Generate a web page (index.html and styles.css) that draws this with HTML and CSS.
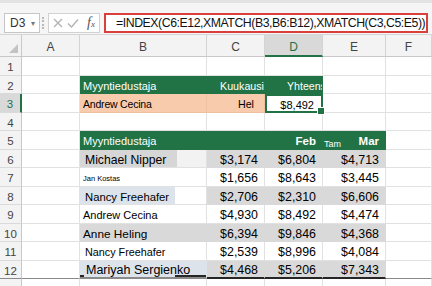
FILE: index.html
```html
<!DOCTYPE html>
<html lang="fi">
  <head>
    <meta charset="UTF-8" />
    <meta name="viewport" content="width=device-width, initial-scale=1.0" />
    <link rel="stylesheet" href="styles.css">
  </head>
  <body>
    <div class="formula-bar">
      <div class="name-box"><span>D3</span><span class="caret">&#9662;</span></div>
      <div class="grip"></div>
      <div class="fx-box">
        <svg class="tool" width="10" height="10" viewBox="0 0 10 10"><path d="M1 1L9 9M9 1L1 9" /></svg>
        <svg class="tool" width="12" height="10" viewBox="0 0 12 10"><path d="M1 5.5L4.5 9L11 1.5" /></svg>
        <span class="fx"><i>f</i><span class="fx-x">x</span></span>
      </div>
      <div class="formula">=INDEX(C6:E12,XMATCH(B3,B6:B12),XMATCH(C3,C5:E5))</div>
    </div>

    <div class="sheet">
      <div class="row head">
        <div class="corner"></div>
        <div class="col">A</div>
        <div class="col">B</div>
        <div class="col">C</div>
        <div class="col active">D</div>
        <div class="col">E</div>
        <div class="col">F</div>
      </div>

      <div class="row">
        <div class="num">1</div>
        <div class="cell"></div><div class="cell"></div><div class="cell"></div>
        <div class="cell"></div><div class="cell"></div><div class="cell"></div>
      </div>

      <div class="row">
        <div class="num">2</div>
        <div class="cell"></div>
        <div class="cell green title">Myyntiedustaja</div>
        <div class="cell green r month">Kuukausi</div>
        <div class="cell green total">Yhteensä</div>
        <div class="cell"></div><div class="cell"></div>
      </div>

      <div class="row">
        <div class="num active">3</div>
        <div class="cell"></div>
        <div class="cell orange pick">Andrew Cecina</div>
        <div class="cell orange r hel">Hel</div>
        <div class="cell selected r">$8,492</div>
        <div class="cell"></div><div class="cell"></div>
      </div>

      <div class="row">
        <div class="num">4</div>
        <div class="cell"></div><div class="cell"></div><div class="cell"></div>
        <div class="cell"></div><div class="cell"></div><div class="cell"></div>
      </div>

      <div class="row">
        <div class="num">5</div>
        <div class="cell"></div>
        <div class="cell green title">Myyntiedustaja</div>
        <div class="cell green"></div>
        <div class="cell green r"><b>Feb</b></div>
        <div class="cell green months"><span class="tam">Tam</span><b>Mar</b></div>
        <div class="cell"></div>
      </div>

      <div class="row">
        <div class="num">6</div>
        <div class="cell"></div>
        <div class="cell name n6">Michael Nipper</div>
        <div class="cell band r">$3,174</div>
        <div class="cell band r">$6,804</div>
        <div class="cell band r">$4,713</div>
        <div class="cell"></div>
      </div>

      <div class="row">
        <div class="num">7</div>
        <div class="cell"></div>
        <div class="cell name n7">Jan Kostas</div>
        <div class="cell r">$1,656</div>
        <div class="cell r">$8,643</div>
        <div class="cell r">$3,445</div>
        <div class="cell"></div>
      </div>

      <div class="row">
        <div class="num">8</div>
        <div class="cell"></div>
        <div class="cell name n8">Nancy Freehafer</div>
        <div class="cell band r">$2,706</div>
        <div class="cell band r">$2,310</div>
        <div class="cell band r">$6,606</div>
        <div class="cell"></div>
      </div>

      <div class="row">
        <div class="num">9</div>
        <div class="cell"></div>
        <div class="cell name n9">Andrew Cecina</div>
        <div class="cell r">$4,930</div>
        <div class="cell r">$8,492</div>
        <div class="cell r">$4,474</div>
        <div class="cell"></div>
      </div>

      <div class="row">
        <div class="num">10</div>
        <div class="cell"></div>
        <div class="cell name n10">Anne Heling</div>
        <div class="cell band r">$6,394</div>
        <div class="cell band r">$9,846</div>
        <div class="cell band r">$4,368</div>
        <div class="cell"></div>
      </div>

      <div class="row">
        <div class="num">11</div>
        <div class="cell"></div>
        <div class="cell name n11">Nancy Freehafer</div>
        <div class="cell r">$2,539</div>
        <div class="cell r">$8,996</div>
        <div class="cell r">$4,084</div>
        <div class="cell"></div>
      </div>

      <div class="row last">
        <div class="num">12</div>
        <div class="cell"></div>
        <div class="cell name n12">Mariyah Sergienko</div>
        <div class="cell band r end">$4,468</div>
        <div class="cell band r end">$5,206</div>
        <div class="cell band r end">$7,343</div>
        <div class="cell"></div>
      </div>

      <div class="row">
        <div class="num"></div>
        <div class="cell"></div><div class="cell"></div><div class="cell"></div>
        <div class="cell"></div><div class="cell"></div><div class="cell"></div>
      </div>
    </div>
  </body>
</html>
```

FILE: styles.css
```css
* {
  box-sizing: border-box;
}

body {
  margin: 0;
  width: 432px;
  height: 286px;
  overflow: hidden;
  background: #fff;
  color: #000;
  font-family: "Liberation Sans", Arial, sans-serif;
}

/* formula bar */
.formula-bar {
  display: flex;
  align-items: flex-start;
  height: 35px;
  padding: 10px 4px 0 4px;
  background: #f5f5f5;
  border-top: 3px solid #e3e3e3;
  border-bottom: 1px solid #d6d6d6;
}

.name-box {
  width: 36px;
  height: 20px;
  background: #fff;
  border: 1px solid #c6c6c6;
  display: flex;
  align-items: center;
  justify-content: space-between;
  padding: 0 4px 0 5px;
  font-size: 12px;
  color: #333;
}

.caret {
  font-size: 8px;
  color: #777;
}

.grip {
  width: 0;
  height: 12px;
  margin: 4px 4px 0 2px;
  border-left: 2px dotted #b8b8b8;
}

.fx-box {
  width: 52px;
  height: 20px;
  background: #fff;
  border: 1px solid #d2d2d2;
  display: flex;
  align-items: center;
  padding-left: 4px;
  gap: 4px;
}

.tool path {
  fill: none;
  stroke: #b4b4b4;
  stroke-width: 1.4;
}

.fx {
  margin-left: 4px;
  font-family: "Liberation Serif", serif;
  font-size: 14px;
  color: #555;
}

.fx-x {
  font-size: 9px;
  font-style: italic;
}

.formula {
  flex: 1;
  margin-left: 4px;
  height: 20px;
  background: #fff;
  border: 2px solid #d9403b;
  padding-left: 10px;
  font-size: 12.3px;
  letter-spacing: -0.45px;
  line-height: 16px;
  white-space: nowrap;
  overflow: hidden;
  color: #111;
}

/* grid */
.row {
  display: grid;
  grid-template-columns: 22px 58px 127px 58px 58px 63px 46px;
  height: 18px;
}

.row:nth-child(even) {
  height: 19px;
}

.row.head {
  height: 22px;
}

.corner {
  position: relative;
  background: #f3f3f3;
  border-right: 1px solid #c8c8c8;
  border-bottom: 1px solid #c8c8c8;
}

.corner::after {
  content: "";
  position: absolute;
  right: 3px;
  bottom: 3px;
  border-style: solid;
  border-width: 0 0 9px 9px;
  border-color: transparent transparent #c3c3c3 transparent;
}

.col {
  display: flex;
  align-items: center;
  justify-content: center;
  padding-top: 3px;
  background: #f3f3f3;
  border-right: 1px solid #d4d4d4;
  border-bottom: 1px solid #c8c8c8;
  font-size: 12px;
  color: #444;
}

.col.active {
  background: #d9d9d9;
  border-bottom: 2px solid #217346;
  color: #217346;
}

.num {
  display: flex;
  align-items: center;
  justify-content: center;
  padding-top: 2px;
  background: #f3f3f3;
  border-right: 1px solid #c8c8c8;
  border-bottom: 1px solid #dadada;
  font-size: 11.5px;
  color: #444;
}

.num.active {
  background: #d9d9d9;
  border-right: 2px solid #217346;
  color: #217346;
}

.cell {
  display: flex;
  align-items: center;
  padding: 2px 4px 0 4px;
  border-right: 1px solid #e1e1e1;
  border-bottom: 1px solid #e1e1e1;
  font-size: 12.4px;
  white-space: nowrap;
  overflow: hidden;
}

.r {
  justify-content: flex-end;
  padding-right: 6px;
}

.green {
  background: #217346;
  border-color: #217346;
  color: #fff;
}

.orange {
  background: #f8cbad;
  border-color: #f0bf9d;
}

.band {
  background: #d9d9d9;
  border-color: #d9d9d9;
}

.title {
  font-size: 11px;
  padding-left: 3px;
}

.month {
  font-size: 10.7px;
  padding-right: 0;
}

.total {
  font-size: 10.6px;
  padding-left: 22px;
  padding-right: 0;
}

.pick {
  font-size: 10.5px;
  letter-spacing: -0.2px;
  padding-left: 3px;
}

.hel {
  font-size: 10.7px;
  padding-right: 10px;
}

.selected {
  position: relative;
  overflow: visible;
  border: 2px solid #217346;
  font-size: 11px;
  padding-right: 7px;
}

.selected::after {
  content: "";
  position: absolute;
  right: -4px;
  bottom: -4px;
  width: 6px;
  height: 6px;
  background: #217346;
  border: 1px solid #fff;
}

.months {
  justify-content: space-between;
  padding: 0 6px 0 1px;
  font-size: 11.5px;
}

.months b {
  padding-top: 2px;
}

.tam {
  align-self: flex-end;
  font-size: 9px;
}

.green b {
  font-size: 11.5px;
}

/* sales rep names */
.name {
  padding-left: 5px;
}

.n6 {
  font-size: 12.2px;
  background: linear-gradient(to right, #d6d6d6 97px, #f2f2f2 97px);
}

.n7 {
  font-size: 7.5px;
  padding-left: 3px;
}

.n8 {
  font-size: 11.3px;
  background: linear-gradient(to right, #dce3ea 95px, #fff 95px);
}

.n9 {
  font-size: 11px;
  padding-left: 3px;
}

.n10 {
  font-size: 11.8px;
  padding-left: 3px;
  background: #d9d9d9;
  border-color: #d9d9d9;
}

.n11 {
  font-size: 10.8px;
}

.n12 {
  font-size: 12.5px;
  padding-left: 6px;
  background: linear-gradient(to right, #262626 4px, transparent 4px, transparent 95px, #262626 95px) bottom / 100% 2px no-repeat, #dde3ea;
  border-bottom: 2px solid transparent;
  border-right-color: #dde3ea;
}

.last .num,
.last .cell {
  border-bottom-color: #8a8a8a;
}

.last .end {
  border-bottom: 2px solid #262626;
}
```
